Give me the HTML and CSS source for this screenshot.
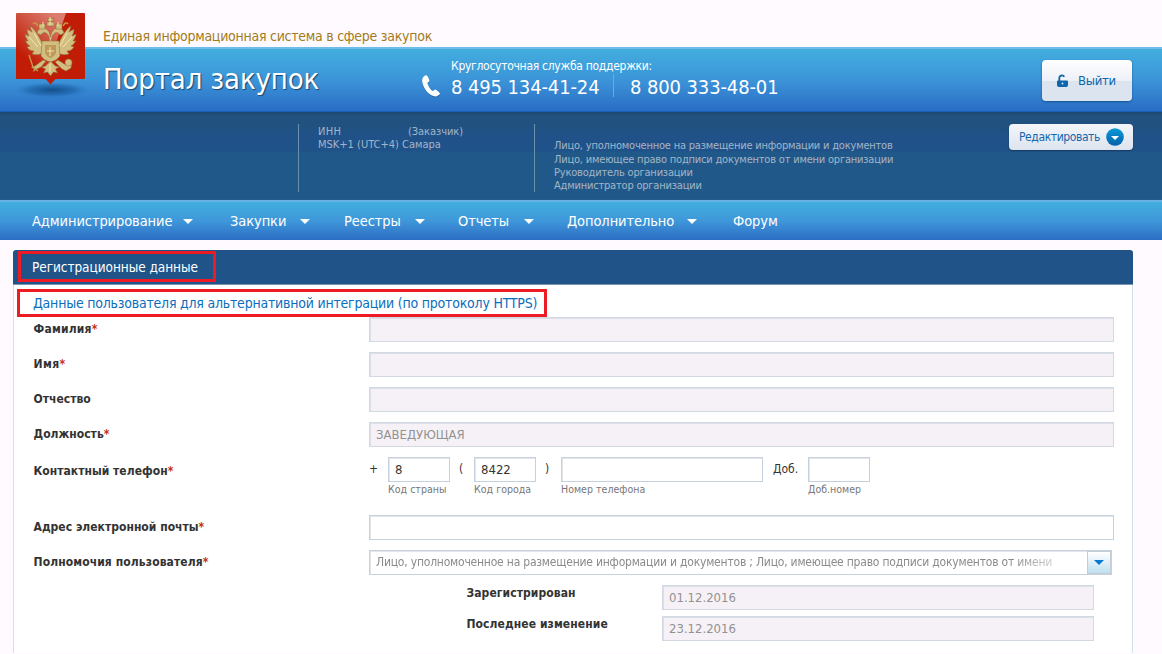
FILE: index.html
```html
<!DOCTYPE html>
<html lang="ru">
<head>
<meta charset="utf-8">
<title>Портал закупок</title>
<link rel="stylesheet" href="styles.css">
</head>
<body>
<div class="page">
<header class="header">
  <div class="strip"><span class="tagline">Единая информационная система в сфере закупок</span></div>
  <div class="banner">
    <h1 class="title">Портал закупок</h1>
    <svg class="handset" viewBox="0 0 20 23"><path d="M5 1.200C3 1.400.8 4 1.200 7.500c.8 6.200 6 13.600 12 14.800 2.300.4 4.800-.8 5.800-2.500.3-.6-3.700-4.300-4.600-4.300-1 0-1.800 1.400-2.600 1.400C9.500 16.400 6.400 11 6.500 9c.1-.8 1.900-1.100 1.900-2 0-1.100-1.800-6-3.400-5.800z"/></svg>
    <div class="support">
      <div class="support-label">Круглосуточная служба поддержки:</div>
      <div class="phones"><span class="ph1">8 495 134-41-24</span><i class="sep"></i><span class="ph2">8 800 333-48-01</span></div>
    </div>
    <button class="logout"><svg viewBox="0 0 11 13"><path d="M1 6.500h9a1 1 0 0 1 1 1V11a2 2 0 0 1-2 2H2a2 2 0 0 1-2-2V7.500a1 1 0 0 1 1-1z"/><path d="M2.300 7V3.700a2.700 2.700 0 0 1 5-.9" fill="none" stroke="#0b66ae" stroke-width="1.800"/><circle cx="5.500" cy="9.500" r=".9" fill="#e9edf5"/></svg><span>Выйти</span></button>
  </div>
  <svg class="emblem" viewBox="0 0 90 100">
    <defs>
      <radialGradient id="sh"><stop offset="0" stop-color="#114c85" stop-opacity=".95"/><stop offset=".6" stop-color="#17589c" stop-opacity=".5"/><stop offset="1" stop-color="#2a78c4" stop-opacity="0"/></radialGradient>
      <linearGradient id="gl" x1="0" y1="1" x2=".7" y2="0"><stop offset=".3" stop-color="#fff" stop-opacity="0"/><stop offset="1" stop-color="#fff" stop-opacity=".42"/></linearGradient>
    </defs>
    <ellipse cx="44" cy="82" rx="38" ry="8" fill="url(#sh)"/>
    <path d="M9 5h67a1 1 0 0 1 1 1v64a1 1 0 0 1-1 1H47.500L42.500 76.500 37.500 71H9a1 1 0 0 1-1-1V6a1 1 0 0 1 1-1z" fill="#c11d06"/>
    <path d="M8 5h50L36 71H8z" fill="url(#gl)"/>
    <g fill="#d2be80" stroke="#86682f" stroke-width=".5">
      <path d="M34 35c-3-7-8-15-12-17 1 3 1 4 2 6-3-2-4-2-5-3 0 3 1 5 2 7-2-1-3-1-4-2 0 3 2 5 3 7-2 0-3 0-3-1 1 3 3 5 5 6l-3 1c2 3 4 4 7 4l-2 3c3 1 6 1 9 0l4-4z"/>
      <path d="M51 35c3-7 8-15 12-17-1 3-1 4-2 6 3-2 4-2 5-3 0 3-1 5-2 7 2-1 3-1 4-2 0 3-2 5-3 7 2 0 3 0 3-1-1 3-3 5-5 6l3 1c-2 3-4 4-7 4l2 3c-3 1-6 1-9 0l-4-4z"/>
      <path d="M41 36c1-6 0-9-3-11-2-1-4 0-5 2-2-1-3-1-4-2 1-4 4-6 7-5 4 1 6 5 6.500 9 .5-4 2.500-8 6.500-9 3-1 6 1 7 5-1 1-2 1-4 2-1-2-3-3-5-2-3 2-4 5-3 11z"/>
      <path d="M34 33h17l1 15c-3 4-6 5-9.500 6C39 53 36 52 33 48z"/>
      <path d="M42.500 53l-5 5-4 1 4 2-2 4 4-1 3 4 3-4 4 1-2-4 4-2-4-1z"/>
      <path d="M35 52l-8 6-4 1 3 2-1 3 4-3 4-2 5-6zM50 52l8 5 3-5 3 2-1 6-5 3-4-2-7-7z"/>
      <path d="M40 13h5l1-3-2 1-1.500-2L41 11l-2-1zM39 14h7v4h-7zM31 16h6v5h-6zM48 16h6v5h-6z"/>
      <circle cx="60.500" cy="54.500" r="3.500"/>
    </g>
    <path d="M37 37h11v8q-2 4-5.500 5Q39 49 37 45z" fill="#bd9a59"/>
    <path d="M42 39v9M39 43h7M26 25l7 13M59 25l-7 13M21 29l9 10M64 29l-9 10M35 14v4M42 9v8M50 14v4M42 56v8" stroke="#f4e6b0" stroke-width="1" fill="none"/>
    <path d="M21 47l4 12 5 4M30 18q-3-5-5-2M55 18q3-5 5-2" stroke="#c49a48" stroke-width="1.400" fill="none"/>
  </svg>
</header>
<section class="account">
  <div class="acc-a"></div>
  <div class="acc-b"><p><span class="inn">ИНН</span><span class="cust">(Заказчик)</span></p><p>MSK+1 (UTC+4) Самара</p></div>
  <div class="acc-c"><p class="first">Лицо, уполномоченное на размещение информации и документов</p><p>Лицо, имеющее право подписи документов от имени организации</p><p>Руководитель организации</p><p>Администратор организации</p></div>
  <button class="edit"><span>Редактировать</span><svg viewBox="0 0 18 18"><defs><linearGradient id="eg" x1="0" y1="0" x2="0" y2="1"><stop offset="0" stop-color="#079bd9"/><stop offset="1" stop-color="#075fa9"/></linearGradient></defs><circle cx="9" cy="9" r="8.800" fill="url(#eg)"/><path d="M5 8h8l-4 4z" fill="#fff"/></svg></button>
</section>
<nav class="nav">
  <a class="n1"><span>Администрирование</span><i></i></a>
  <a class="n2"><span>Закупки</span><i></i></a>
  <a class="n3"><span>Реестры</span><i></i></a>
  <a class="n4"><span>Отчеты</span><i></i></a>
  <a class="n5"><span>Дополнительно</span><i></i></a>
  <a class="n6"><span>Форум</span></a>
</nav>
<main class="panel">
  <div class="panel-head"><h2 class="marked">Регистрационные данные</h2></div>
  <div class="panel-body">
    <div class="link marked">Данные пользователя для альтернативной интеграции (по протоколу HTTPS)</div>
    <div class="row"><label class="wide">Фамилия<b>*</b></label><div class="field off"></div></div>
    <div class="row"><label class="wider">Имя<b>*</b></label><div class="field off"></div></div>
    <div class="row"><label>Отчество</label><div class="field off"></div></div>
    <div class="row"><label class="up">Должность<b>*</b></label><div class="field off">ЗАВЕДУЮЩАЯ</div></div>
    <div class="row phone-row"><label class="down">Контактный телефон<b>*</b></label>
      <div class="phone">
        <span class="plus">+</span>
        <div><div class="field">8</div><small>Код страны</small></div>
        <span class="par">(</span>
        <div><div class="field">8422</div><small>Код города</small></div>
        <span class="par2">)</span>
        <div class="num"><div class="field"></div><small>Номер телефона</small></div>
        <span class="ext">Доб.</span>
        <div><div class="field"></div><small>Доб.номер</small></div>
      </div>
    </div>
    <div class="row"><label class="mail">Адрес электронной почты<b>*</b></label><div class="field"></div></div>
    <div class="row"><label class="roles">Полномочия пользователя<b>*</b></label><div class="field select"><span>Лицо, уполномоченное на размещение информации и документов ; Лицо, имеющее право подписи документов от имени</span><i class="drop"></i></div></div>
    <div class="dates">
      <label>Зарегистрирован</label><div class="field off">01.12.2016</div>
      <label>Последнее изменение</label><div class="field off">23.12.2016</div>
    </div>
  </div>
</main>
</div>
</body>
</html>
```
FILE: styles.css
```css
* { box-sizing: border-box; }
body { margin: 0; background: #fefaff; font-family: "DejaVu Sans Condensed", "DejaVu Sans", sans-serif; font-stretch: condensed; font-size: 12px; color: #333; }
.page { height: 653px; overflow: hidden; }
h1, h2, p { margin: 0; font-weight: normal; }
p, span, label, small, h1, h2, .link, .support-label { white-space: nowrap; }
button { font-family: inherit; border: 0; margin: 0; }
.header { position: relative; }
.strip { height: 47px; padding: 27px 0 0 103px; line-height: 18px; font-size: 14px; letter-spacing: -.26px; color: #a37a20; }
.banner { height: 65px; display: flex; border-top: 2px solid #70bce9; border-bottom: 1px solid #1761ba; background: linear-gradient(#42aedf, #3c94d8 50%, #296dc5); color: #fff; }
.title { width: 319px; padding-left: 103px; margin-right: 102px; font-size: 29px; line-height: 34px; letter-spacing: -.14px; padding-top: 13px; text-shadow: 1px 1px 1px #174672; }
.handset { width: 20px; height: 23px; margin-top: 25px; flex: none; fill: #fff; filter: drop-shadow(0 1px 0 #2567ab); }
.support { width: 350px; padding: 10px 0 0 10px; }
.support-label { line-height: 15px; letter-spacing: -.28px; }
.phones { display: flex; font-size: 20px; line-height: 26px; letter-spacing: -.12px; }
.ph1 { width: 162px; } .ph2 { padding-left: 16px; }
.sep { width: 1px; height: 23px; background: #64aee6; }
.logout { width: 90px; height: 41px; margin: 11px 30px 0 auto; padding: 0 0 0 15px; display: flex; align-items: center; border-radius: 4px; background: linear-gradient(#fff, #eef0f8 50%, #dce5ef 51%, #dce5ef); box-shadow: 0 1px 2px #155392; color: #0b66ae; font-size: 13px; letter-spacing: -.3px; }
.logout svg { width: 11px; height: 13px; margin-right: 10px; fill: #0b66ae; }
.emblem { position: absolute; left: 8px; top: 8px; width: 90px; height: 100px; }
.account { height: 88px; display: flex; align-items: flex-start; padding-top: 12px; background: linear-gradient(#1c4671, #22527e 5%, #205180 18%, #205289 25%, #20528a 44%, #205989 46%, #205989 98%, #2a5c8f); color: #a3b5c7; font-size: 11px; line-height: 13px; }
.acc-a { width: 298px; }
.acc-b, .acc-c { height: 68px; border-left: 1px solid #6b8fad; padding-left: 19px; }
.acc-b { width: 236px; padding-top: 1px; }
.inn { display: inline-block; width: 90px; letter-spacing: .3px; }
.cust { letter-spacing: -.07px; }
.acc-c { width: 475px; padding-top: 15px; letter-spacing: -.2px; }
.acc-c .first { height: 14px; }
.edit { width: 124px; height: 26px; padding: 0 0 0 10px; display: flex; align-items: center; justify-content: flex-start; border-radius: 4px; background: linear-gradient(#f4f5fa, #dce4ee); box-shadow: 0 1px 2px #15395f; color: #1667ae; font-size: 12px; letter-spacing: -.4px; }
.edit span { width: 87px; text-align: left; }
.edit svg { width: 18px; height: 18px; }
.nav { height: 40px; display: flex; border-top: 2px solid #69b2e5; background: linear-gradient(#42aedf, #3f97d9 50%, #2b6dc5); color: #fff; font-size: 14.5px; letter-spacing: -.08px; line-height: 38px; }
.nav a { display: flex; align-items: center; justify-content: space-between; }
.nav i { border: 5px solid transparent; border-top-color: #fff; border-bottom: 0; }
.n1 { width: 161px; margin-left: 32px; } .n2 { width: 80px; margin-left: 37px; } .n3 { width: 81px; margin-left: 34px; } .n4 { width: 76px; margin-left: 33px; } .n5 { width: 130px; margin-left: 33px; } .n6 { margin-left: 36px; }
.panel { width: 1120px; height: 403px; margin: 10px 0 0 13px; }
.panel-head { height: 35px; padding: 1px 0 0 5px; background: #205489; border-bottom: 1px solid #7895b6; border-radius: 3px 3px 0 0; }
.marked { border: 3px solid #ed1c24; }
.panel-head h2 { width: 198px; height: 31px; padding-left: 11px; color: #fff; font-size: 13.5px; letter-spacing: -.06px; line-height: 27px; }
.panel-body { height: 368px; padding: 4px 0 0 4px; background: #fff; border: solid #d3e1eb; border-width: 0 1px; }
.link { width: 530px; height: 28px; margin-left: -1px; padding-left: 13px; font-size: 14px; letter-spacing: -.22px; line-height: 23px; color: #0a6ebd; }
.row { display: grid; grid-template-columns: 336px 745px; height: 35px; margin-left: 15px; }
label { font-weight: bold; line-height: 25px; padding-left: .5px; letter-spacing: .02px; }
label b { color: #c32d14; letter-spacing: 0; }
label.wide { line-height: 24px; letter-spacing: .2px; }
label.wider { letter-spacing: .4px; }
label.up { line-height: 24px; }
label.down { line-height: 28px; }
label.mail { letter-spacing: .02px; }
label.roles { letter-spacing: .1px; }
.field { height: 25px; padding-left: 6px; font-size: 13px; line-height: 24px; border: 1px solid #c5d1dd; box-shadow: inset 1px 1px 0 #e5e5ea; background: #fff; }
.field.off { background: #f6f1f6; border-color: #d2d9e3; color: #929292; box-shadow: inset 1px 1px 0 #dddfe6; }
.phone-row { height: 58px; }
.phone { display: flex; }
.phone > div { width: 62px; }
.phone > .num { width: 202px; }
.phone > span { line-height: 25px; }
.plus { width: 19px; } .par { width: 24px; padding-left: 9px; } .par2 { width: 25px; padding-left: 9px; } .ext { width: 45px; padding-left: 10px; }
.phone small { display: block; font-size: 10.5px; line-height: 15px; letter-spacing: .03px; color: #777; }
.field.select { width: 743px; display: flex; justify-content: space-between; font-size: 12px; line-height: 23px; letter-spacing: -.207px; color: #8b8b8b; }
.select span { -webkit-mask-image: linear-gradient(90deg, #000 94%, #0006); }
.drop { width: 24px; height: 23px; border: 1px solid #c4cdd6; background: linear-gradient(#fff, #bfe0f0); display: flex; align-items: center; justify-content: center; }
.drop::after { content: ""; border: 5px solid transparent; border-top-color: #0879d0; border-bottom: 0; }
.dates { display: grid; grid-template-columns: 196px 432px; row-gap: 6px; margin-left: 448px; }
.dates label { line-height: 17px; letter-spacing: .08px; }
```
